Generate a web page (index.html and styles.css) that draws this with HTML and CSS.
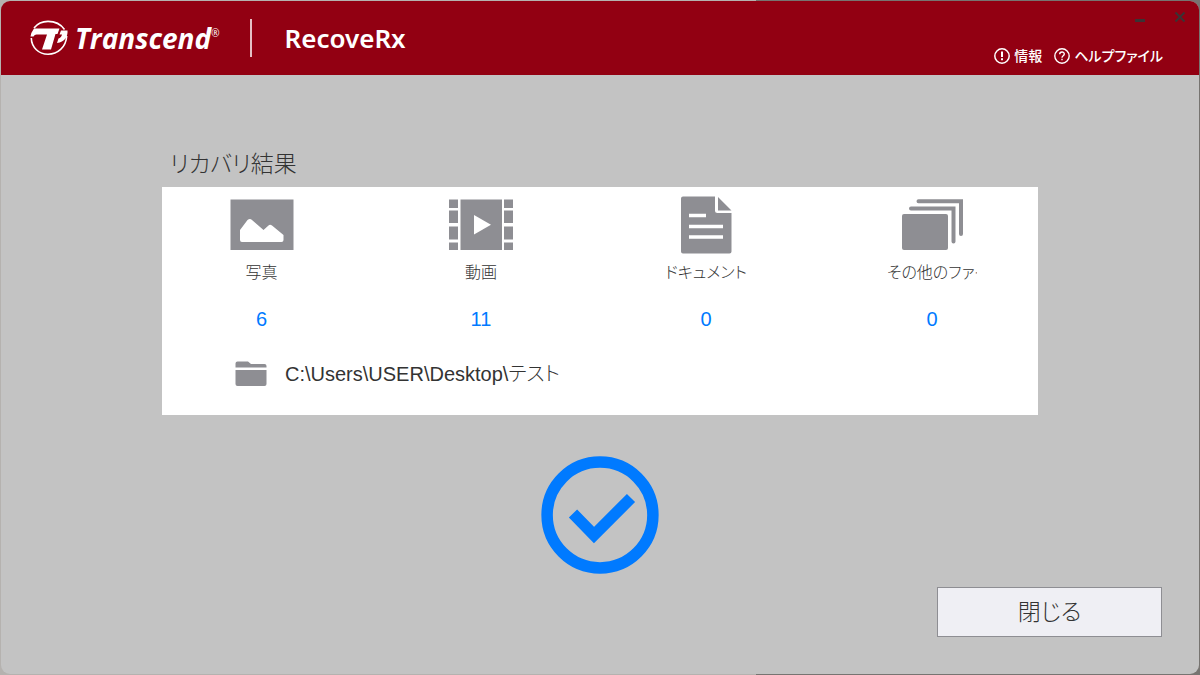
FILE: index.html
```html
<!DOCTYPE html>
<html lang="ja">
<head>
    <meta charset="UTF-8">
    <meta name="viewport" content="width=device-width, initial-scale=1.0">
    <title>RecoveRx</title>
    <link rel="stylesheet" href="styles.css">
</head>
<body>
    <div class="window">
        <header class="header">
            <div class="brand">
                <svg class="brand-logo" viewBox="0 0 38 36" fill="#fff">
                    <path d="M4 8C8 3 13 1.400 18 1.400C25 1.400 31 4.500 34.500 9.500" fill="none" stroke="#fff" stroke-width="1.600"/>
                    <path d="M1.300 18C1.500 27.500 9 34.300 18 34.300C27.500 34.300 36 27.500 36.700 16" fill="none" stroke="#fff" stroke-width="1.600"/>
                    <path d="M4 8.500H29.500L27.500 14H25.500L21 29.500H12L17 14.500H6.500Q4.500 14.500 3.500 16.500H0.500Q1 12.500 4 8.500Z"/>
                    <path d="M31 10.500H37.500C38 17 34.500 22 27 23L28.500 18.500C30.500 18 31.500 16.500 32 14.500H29.500Z"/>
                </svg>
                <span class="brand-name">Transcend<sup>®</sup></span>
            </div>
            <h1 class="product">RecoveRx</h1>

            <div class="header-right">
                <div class="window-buttons">
                    <button type="button" aria-label="最小化">
                        <svg width="12" height="12" viewBox="0 0 12 12"><path d="M1 9.500H11" stroke="#3a3335" stroke-width="3"/></svg>
                    </button>
                    <button type="button" aria-label="閉じる">
                        <svg width="12" height="12" viewBox="0 0 12 12"><path d="M1.500 1.500L10.500 10.500M10.500 1.500L1.500 10.500" stroke="#3a3335" stroke-width="2"/></svg>
                    </button>
                </div>
                <nav class="links">
                    <a href="#info">
                        <svg width="16" height="16" viewBox="0 0 16 16" fill="none" stroke="#fff">
                            <circle cx="8" cy="8" r="7.200" stroke-width="1.500"/>
                            <path d="M8 3.500V9M8 10.300V12.300" stroke-width="2"/>
                        </svg>
                        情報
                    </a>
                    <a href="#help">
                        <svg width="16" height="16" viewBox="0 0 16 16" fill="none" stroke="#fff">
                            <circle cx="8" cy="8" r="7.200" stroke-width="1.400"/>
                            <path d="M5.700 6.200C5.700 3.300 10.300 3.300 10.300 6C10.300 7.800 8 7.800 8 9.800M8 10.800V12.300" stroke-width="1.400"/>
                        </svg>
                        ヘルプファイル
                    </a>
                </nav>
            </div>
        </header>

        <main class="content">
            <h2>リカバリ結果</h2>
            <section class="card">
                <div class="results">
                    <div class="result">
                        <svg width="64" height="58" viewBox="0 0 64 58">
                            <path d="M0.500 3.500H63.500V54H0.500Z" fill="#8e8e93"/>
                            <path d="M10 34L17.500 24Q20 22 22 24L33.500 34L38.500 29.500Q40 28 42 29.500L53.500 39V44Q53.500 46 51.500 46H12Q10 46 10 44Z" fill="#fff"/>
                        </svg>
                        <span class="label">写真</span>
                        <span class="count">6</span>
                    </div>
                    <div class="result">
                        <svg width="64" height="58" viewBox="0 0 64 58">
                            <path d="M0 3.500H9V12H0ZM0 14.500H9V27H0ZM0 30.500H9V43.500H0ZM0 46.500H9V54H0ZM55 3.500H64V12H55ZM55 14.500H64V27H55ZM55 30.500H64V43.500H55ZM55 46.500H64V54H55ZM11.500 3.500H53V54H11.500Z" fill="#8e8e93"/>
                            <path d="M25 19L42 28.700L25 38.500Z" fill="#fff"/>
                        </svg>
                        <span class="label">動画</span>
                        <span class="count">11</span>
                    </div>
                    <div class="result">
                        <svg width="64" height="58" viewBox="0 0 64 58">
                            <path d="M9 0.500H41V14.500Q41 17 43.500 17H57.500V55.500Q57.500 57.500 55.500 57.500H9Q7 57.500 7 55.500V2.500Q7 0.500 9 0.500ZM44 1L57.500 14.500H44Z" fill="#8e8e93"/>
                            <path d="M15 19.500H32M15 30.500H49M15 41H49" stroke="#fff" stroke-width="3.500"/>
                        </svg>
                        <span class="label">ドキュメント</span>
                        <span class="count">0</span>
                    </div>
                    <div class="result">
                        <svg width="64" height="58" viewBox="0 0 64 58">
                            <rect x="2" y="18" width="46" height="36" rx="2" fill="#8e8e93"/>
                            <path d="M11 12.500H53.500V45.500M18.500 5.200H61V38" fill="none" stroke="#8e8e93" stroke-width="4" stroke-linecap="round"/>
                        </svg>
                        <span class="label">その他のファイル</span>
                        <span class="count">0</span>
                    </div>
                </div>
                <div class="folder">
                    <svg width="32" height="26" viewBox="0 0 32 26" fill="#8e8e93">
                        <path d="M0.500 6.500V2.500Q0.500 0.500 2.500 0.500H13L16 3H29.500Q31.500 3 31.500 5V6.500Z"/>
                        <path d="M0.500 9H31.500V23Q31.500 25 29.500 25H2.500Q0.500 25 0.500 23Z"/>
                    </svg>
                    <span class="path">C:\Users\USER\Desktop\テスト</span>
                </div>
            </section>

            <svg class="done" viewBox="0 0 118 118" fill="none" stroke="#007aff">
                <circle cx="59" cy="59" r="52.900" stroke-width="11.500"/>
                <path d="M32 57.500L53 79L90 42" stroke-width="11.500"/>
            </svg>
        </main>

        <footer class="footer">
            <button type="button" class="close-button">閉じる</button>
        </footer>
    </div>
</body>
</html>
```
FILE: styles.css
```css
* {
    box-sizing: border-box;
}

body {
    margin: 0;
    padding: 1px;
    min-height: 100vh;
    display: flex;
    background: linear-gradient(90deg, #b5b2af 63%, #777471 63%);
    color: #333;
    font-family: "Liberation Sans", "Noto Sans CJK JP", sans-serif;
    font-feature-settings: "palt";
}

h1, h2 {
    margin: 0;
    font-weight: 400;
}

.window {
    flex: 1;
    display: flex;
    flex-direction: column;
    background: #c3c3c3;
    border-radius: 9px;
    overflow: hidden;
}

/* Header */
.header {
    height: 74px;
    display: flex;
    background: #920012;
    color: #fff;
}

.brand {
    display: flex;
    align-items: center;
    height: 38px;
    margin-top: 18px;
    padding: 0 31px 0 29px;
    border-right: 2px solid #e4bfc4;
}

.brand-logo {
    width: 38px;
    height: 36px;
    margin-right: 7px;
}

.brand-name {
    font: italic 700 28px/36px "Open Sans", sans-serif;
}

.brand-name sup {
    font-size: 10px;
    font-style: normal;
    font-weight: 400;
    line-height: 1;
    vertical-align: 12px;
}

.product {
    margin: 19px 0 0 32px;
    font: 600 26px/36px "Noto Sans", sans-serif;
}

.header-right {
    flex: 1;
    display: flex;
    flex-direction: column;
    align-items: flex-end;
}

.window-buttons {
    display: flex;
    gap: 28px;
    padding: 10px 13px 0 0;
}

.window-buttons button {
    display: flex;
    padding: 0;
    border: none;
    background: none;
    cursor: pointer;
}

.links {
    display: flex;
    gap: 12px;
    margin-top: 21px;
    padding-right: 36px;
}

.links a {
    display: flex;
    align-items: center;
    gap: 4px;
    color: #fff;
    font-size: 14px;
    font-weight: 500;
    line-height: 24px;
    text-decoration: none;
}

/* Results */
.content {
    flex: 1;
    display: flex;
    flex-direction: column;
    width: 73vw;
    margin: 0 auto;
    padding-top: 71px;
}

h2 {
    padding-left: 8px;
    font-size: 23px;
    font-weight: 300;
    line-height: 36px;
}

.card {
    margin-top: 5px;
    padding: 9px 61px 25px 54px;
    background: #fff;
}

.results {
    display: grid;
    grid-template-columns: 91fr 88fr 102fr 90fr;
    column-gap: 130px;
}

.result {
    display: flex;
    flex-direction: column;
    align-items: center;
    min-width: 0;
}

.label {
    max-width: 100%;
    margin-top: 7px;
    font-size: 16px;
    font-weight: 300;
    line-height: 24px;
    white-space: nowrap;
    overflow: hidden;
}

.count {
    margin-top: 22px;
    color: #007aff;
    font-size: 20px;
    line-height: 24px;
}

.folder {
    display: flex;
    align-items: center;
    gap: 18px;
    margin: 27px 0 0 19px;
}

.path {
    font-size: 20px;
    font-weight: 300;
    line-height: 32px;
}

.done {
    width: 118px;
    height: 118px;
    margin: 41px auto 0;
}

/* Footer */
.footer {
    display: flex;
    justify-content: flex-end;
    padding: 0 37px 37px;
}

.close-button {
    width: 225px;
    height: 50px;
    padding: 0 0 5px;
    border: 1px solid #8e8e93;
    background: #efeff4;
    color: #333;
    font: inherit;
    font-size: 23px;
    font-weight: 300;
    font-feature-settings: inherit;
    cursor: pointer;
}
```
